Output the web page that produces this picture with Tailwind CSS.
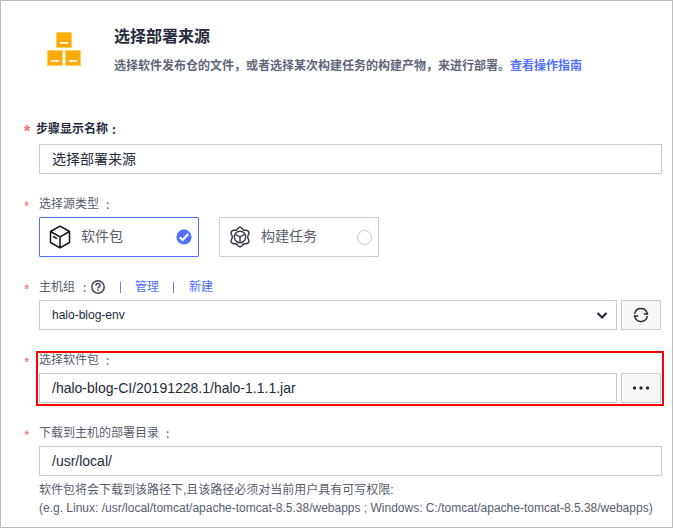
<!DOCTYPE html>
<html lang="zh-CN">
<head>
<meta charset="utf-8">
<title>选择部署来源</title>
<script src="https://cdn.jsdelivr.net/npm/@tailwindcss/browser@4"></script>
</head>
<body class="bg-white">
<main class="w-[673px] h-[528px] overflow-hidden border border-[#bcbcbc] pl-[23px] pr-[10px] font-['Liberation_Sans','Noto_Sans_CJK_SC',sans-serif] text-[12px] leading-[18px] text-[#575d6c]">
  <header class="flex h-[118px] pt-[24px] pl-[23px]">
    <svg class="mt-[7px] w-[34px] h-[34px] shrink-0" viewBox="0 0 34 34">
      <g fill="#ffac0a" stroke="#ffcb62" stroke-width="1">
        <rect x="9.5" y=".5" width="15" height="15"/><rect x=".5" y="18.5" width="15" height="15"/><rect x="18.500" y="18.500" width="15" height="15"/>
      </g>
      <path fill="none" stroke="#fff3d9" stroke-width="2" d="M13 11h8M4 29h8M22 29h8"/>
    </svg>
    <div class="ml-[33px]">
      <h1 class="text-[16px] leading-[24px] font-bold text-[#252b3a]">选择部署来源</h1>
      <p class="mt-[8px] font-bold whitespace-nowrap text-[#616778]">选择软件发布仓的文件，或者选择某次构建任务的构建产物，来进行部署。<a class="text-[#4f6fff]">查看操作指南</a></p>
    </div>
  </header>

  <section>
    <div class="flex h-[20px] items-center font-bold text-[#252b3a]"><span class="w-[12px] pt-[6px] text-[16px] font-bold text-[#f66f6a]">*</span><span>步骤显示名称</span><span class="ml-[4px] font-['Noto_Sans_CJK_SC']">:</span></div>
    <div class="mt-[5px] ml-[15px] flex h-[30px] w-[623px] items-center border border-[#c9ccd7] px-[12px] text-[14px] text-[#252b3a]">选择部署来源</div>
  </section>

  <section class="mt-[20px]">
    <div class="flex h-[20px] items-center"><span class="w-[15px] pt-[3px] text-[14px] text-[#f66f6a]">*</span><span>选择源类型</span><span class="ml-[7px] font-['Noto_Sans_CJK_SC']">:</span></div>
    <div class="mt-[3px] ml-[15px] flex gap-[20px] text-[14px]">
      <div class="flex h-[40px] w-[160px] items-center rounded-[1px] border border-[#5170ff] pl-[9px] pr-[6px]">
        <svg class="w-[22px] h-[24px]" viewBox="0 0 22 24" fill="none" stroke="#111" stroke-width="1.500" stroke-linejoin="round"><path d="M11 1.200 20.500 6.500v11L11 22.800 1.500 17.500v-11zM1.500 6.500 11 11.800l9.500-5.300M11 11.800v11M4.200 11.500l4 2.200"/></svg>
        <span class="ml-[10px] -mt-[2px]">软件包</span>
        <svg class="ml-auto w-[16px] h-[16px]" viewBox="0 0 16 16"><circle cx="8" cy="8" r="7.600" fill="#5170ff"/><path d="m3.800 8.200 2.800 2.800 5.600-6" fill="none" stroke="#fff" stroke-width="2"/></svg>
      </div>
      <div class="flex h-[40px] w-[160px] items-center rounded-[1px] border border-[#c9ccd7] pl-[9px] pr-[6px]">
        <svg class="w-[22px] h-[22px]" viewBox="0 0 22 22" fill="none" stroke="#303746" stroke-width="1.400" stroke-linejoin="round"><path d="M7.500 4.200 9.200 2q1.800-1.500 3.600 0l1.700 2.200 2.800.1q2.800.4 2.700 3.200L18.800 10v2l1.200 2.500q.1 2.800-2.700 3.200l-2.800.1-1.700 2.200q-1.800 1.500-3.600 0l-1.700-2.200-2.800-.1q-2.800-.4-2.700-3.200L3.200 12v-2L2 7.500q-.1-2.800 2.700-3.200z"/><circle cx="11" cy="11" r="5.700"/><path d="M7 8.700l4 2.300 4-2.300M11 11v5.500"/></svg>
        <span class="ml-[10px] -mt-[2px]">构建任务</span>
        <span class="ml-auto h-[15px] w-[15px] rounded-full border border-[#c5c8d3]"></span>
      </div>
    </div>
  </section>

  <section class="mt-[20px]">
    <div class="flex h-[20px] items-center"><span class="w-[15px] pt-[3px] text-[14px] text-[#f66f6a]">*</span><span>主机组</span><span class="ml-[8px] w-[3px] font-['Noto_Sans_CJK_SC']">:</span>
      <svg class="ml-[5px] w-[14px] h-[14px]" viewBox="0 0 14 14" fill="none" stroke="#464c59" stroke-width="1.500"><circle cx="7" cy="7" r="6.200"/><path d="M4.900 5.500q0-2 2.100-2t2.100 1.800Q9.100 6.300 8 7t-1 1.500M7 9.500V11"/></svg>
      <i class="ml-[15px] h-[11px] w-px bg-[#7186e0]"></i><a class="ml-[14px] text-[#4f6fff]">管理</a><i class="ml-[14px] h-[11px] w-px bg-[#7186e0]"></i><a class="ml-[15px] text-[#4f6fff]">新建</a>
    </div>
    <div class="mt-[3px] ml-[15px] flex gap-[4px]">
      <div class="flex h-[30px] w-[578px] items-center justify-between border border-[#c9ccd7] pl-[12px] pr-[8px] text-[#252b3a]"><span>halo-blog-env</span>
        <svg class="w-[12px] h-[10px]" viewBox="0 0 12 10" fill="none" stroke="#252b3a" stroke-width="2.200"><path d="m1.500 3 4.500 4.500L10.500 3"/></svg>
      </div>
      <div class="flex h-[30px] w-[40px] items-center justify-center border border-[#c9ccd7] bg-[#f8f8f8]">
        <svg class="w-[16px] h-[16px]" viewBox="0 0 16 16" fill="none" stroke="#252b3a" stroke-width="1.500"><path d="M1.600 7A6.500 6.500 0 0 1 14 5.500V7.200M14.400 9A6.500 6.500 0 0 1 2 10.500V8.800"/><path d="M15.300 7h-4.500M.7 9h4.500"/></svg>
      </div>
    </div>
  </section>

  <section class="relative mt-[20px]">
    <div class="flex h-[20px] items-center"><span class="w-[15px] pt-[3px] text-[14px] text-[#f66f6a]">*</span><span>选择软件包</span><span class="ml-[7px] font-['Noto_Sans_CJK_SC']">:</span></div>
    <div class="mt-[3px] ml-[15px] flex gap-[4px]">
      <div class="flex h-[30px] w-[578px] items-center border border-[#c9ccd7] px-[12px] text-[14px] text-[#252b3a]">/halo-blog-CI/20191228.1/halo-1.1.1.jar</div>
      <div class="flex h-[30px] w-[40px] items-center justify-center border border-[#c9ccd7] bg-[#f8f8f8]"><svg class="w-[18px] h-[4px]" viewBox="0 0 18 4" fill="#252b3a"><circle cx="2.500" cy="2" r="1.700"/><circle cx="9" cy="2" r="1.700"/><circle cx="15.500" cy="2" r="1.700"/></svg></div>
    </div>
    <div class="absolute top-[1px] left-[12px] h-[55px] w-[628px] border-2 border-[#fb0007]"></div>
  </section>

  <section class="mt-[20px]">
    <div class="flex h-[20px] items-center"><span class="w-[15px] pt-[3px] text-[14px] text-[#f66f6a]">*</span><span>下载到主机的部署目录</span><span class="ml-[7px] font-['Noto_Sans_CJK_SC']">:</span></div>
    <div class="mt-[3px] ml-[15px] flex h-[30px] w-[623px] items-center border border-[#c9ccd7] px-[12px] text-[14px] text-[#252b3a]">/usr/local/</div>
    <p class="mt-[5px] ml-[15px] whitespace-nowrap">软件包将会下载到该路径下,且该路径必须对当前用户具有可写权限:<br>(e.g. Linux: /usr/local/tomcat/apache-tomcat-8.5.38/webapps ; Windows: C:/tomcat/apache-tomcat-8.5.38/webapps)</p>
  </section>
</main>
</body>
</html>
